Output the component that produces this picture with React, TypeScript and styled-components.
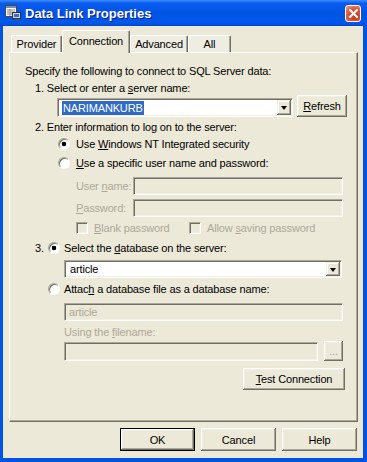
import styled, { createGlobalStyle } from "styled-components";

const GlobalStyle = createGlobalStyle`
  html, body {
    margin: 0;
    padding: 0;
  }
  body {
    font-family: "Liberation Sans", Arial, sans-serif;
    font-size: 11px;
    letter-spacing: -0.15px;
    color: #000;
    background: #ece9d8;
  }
  * {
    box-sizing: border-box;
  }
`;

const Window = styled.div`
  width: 367px;
  height: 462px;
  display: flex;
  flex-direction: column;
  background: #0054e3;
  overflow: hidden;
`;

const TitleBar = styled.div`
  height: 26px;
  flex: none;
  display: flex;
  align-items: center;
  gap: 4px;
  padding: 0 6px 0 5px;
  background: linear-gradient(
    180deg,
    #3d8dff 0%,
    #0a5cf0 12%,
    #0054e3 50%,
    #0058eb 85%,
    #0049d4 100%
  );
`;

const TitleText = styled.span`
  font-family: "Liberation Sans", Arial, sans-serif;
  font-size: 13px;
  font-weight: 700;
  letter-spacing: 0;
  color: #fff;
  text-shadow: 1px 1px 0 #0a1f8a;
  white-space: nowrap;
`;

const CloseButton = styled.div`
  width: 16px;
  height: 17px;
  margin-left: auto;
  border: 1px solid #fff;
  border-radius: 3px;
  background: radial-gradient(circle at 65% 70%, #c4371b 0%, #e2573a 55%, #f2a08a 100%);
  display: flex;
  align-items: center;
  justify-content: center;
`;

const Client = styled.div`
  flex: 1;
  margin: 0 4px 4px 3px;
  padding: 4px 5px 0 6px;
  background: #ece9d8;
  display: flex;
  flex-direction: column;
`;

const TabRow = styled.div`
  height: 22px;
  flex: none;
  display: flex;
  align-items: flex-end;
  padding-left: 2px;
`;

const Tab = styled.div<{ $active?: boolean; $w: number }>`
  width: ${(p) => p.$w}px;
  height: ${(p) => (p.$active ? 23 : 17)}px;
  margin-bottom: ${(p) => (p.$active ? -1 : 0)}px;
  padding-bottom: ${(p) => (p.$active ? 2 : 0)}px;
  position: relative;
  z-index: ${(p) => (p.$active ? 2 : 1)};
  display: flex;
  align-items: center;
  justify-content: center;
  background: ${(p) => (p.$active ? "#ece9d8" : "#efede2")};
  border-top: 1px solid #fff;
  border-left: 1px solid #fff;
  border-right: 1px solid #716f64;
  box-shadow: inset -1px 0 #aca899;
  border-radius: 2px 2px 0 0;
`;

const Panel = styled.div`
  height: 370px;
  flex: none;
  display: flex;
  flex-direction: column;
  padding-top: 9px;
  background: #ece9d8;
  border-top: 1px solid #fff;
  border-left: 1px solid #fff;
  border-right: 1px solid #716f64;
  border-bottom: 1px solid #716f64;
  box-shadow: inset -1px -1px #aca899;
`;

const Line = styled.div<{ $h: number; $indent?: number; $align?: string; $right?: number }>`
  height: ${(p) => p.$h}px;
  flex: none;
  display: flex;
  align-items: ${(p) => p.$align ?? "center"};
  justify-content: ${(p) => (p.$right !== undefined ? "flex-end" : "flex-start")};
  margin-left: ${(p) => p.$indent ?? 0}px;
  padding-right: ${(p) => p.$right ?? 0}px;
  white-space: nowrap;
`;

const Text = styled.span<{ $disabled?: boolean; $w?: number }>`
  color: ${(p) => (p.$disabled ? "#aca899" : "#000")};
  width: ${(p) => (p.$w ? `${p.$w}px` : "auto")};
  flex: none;
`;

const U = styled.span`
  text-decoration: underline;
  text-underline-offset: 1px;
`;

const Radio = styled.span<{ $checked?: boolean; $gap: number }>`
  width: 12px;
  height: 12px;
  flex: none;
  margin-right: ${(p) => p.$gap}px;
  border-radius: 50%;
  border: 1px solid;
  border-color: #aca899 #fff #fff #aca899;
  box-shadow: inset 1px 1px #716f64;
  background: ${(p) =>
    p.$checked
      ? "radial-gradient(circle at 50% 50%, #000 0 2px, #fff 2.6px)"
      : "#fff"};
`;

const Check = styled.span`
  width: 12px;
  height: 12px;
  flex: none;
  margin-right: 6px;
  border: 1px solid;
  border-color: #aca899 #fff #fff #aca899;
  box-shadow: inset 1px 1px #716f64, inset -1px -1px #f1efe2;
  background: #ece9d8;
`;

const CheckItem = styled.span<{ $w?: number }>`
  display: flex;
  align-items: center;
  width: ${(p) => (p.$w ? `${p.$w}px` : "auto")};
`;

const Field = styled.div<{ $w: number; $h: number; $disabled?: boolean }>`
  width: ${(p) => p.$w}px;
  height: ${(p) => p.$h}px;
  flex: none;
  display: flex;
  align-items: center;
  padding: 2px 2px 2px 4px;
  border: 1px solid;
  border-color: #aca899 #fff #fff #aca899;
  box-shadow: inset 1px 1px #716f64, inset -1px -1px #f1efe2;
  background: ${(p) => (p.$disabled ? "#ece9d8" : "#fff")};
  color: ${(p) => (p.$disabled ? "#aca899" : "#000")};
`;

const ComboValue = styled.span<{ $selected?: boolean }>`
  flex: 1;
  display: flex;
  & > span {
    padding: 1px 1px;
    background: ${(p) => (p.$selected ? "#316ac5" : "transparent")};
    color: ${(p) => (p.$selected ? "#fff" : "#000")};
  }
`;

const DropButton = styled.span`
  width: 14px;
  align-self: stretch;
  flex: none;
  margin: -1px -1px -1px 0;
  display: flex;
  align-items: center;
  justify-content: center;
  background: #ece9d8;
  box-shadow: inset -1px -1px #716f64, inset 1px 1px #f1efe2, inset -2px -2px #aca899,
    inset 2px 2px #fff;
  &::before {
    content: "";
    border-left: 3.5px solid transparent;
    border-right: 3.5px solid transparent;
    border-top: 4px solid #000;
    margin-top: 1px;
  }
`;

const Button = styled.button<{ $w: number; $h: number; $default?: boolean; $disabled?: boolean }>`
  width: ${(p) => p.$w}px;
  height: ${(p) => p.$h}px;
  flex: none;
  padding: 0;
  font: inherit;
  letter-spacing: inherit;
  color: ${(p) => (p.$disabled ? "#aca899" : "#000")};
  background: #ece9d8;
  border: ${(p) => (p.$default ? "1px solid #000" : "none")};
  box-shadow: inset -1px -1px #716f64, inset 1px 1px #fff, inset -2px -2px #aca899,
    inset 2px 2px #f1efe2;
  cursor: default;
`;

const ButtonRow = styled.div`
  margin-top: 6px;
  display: flex;
  justify-content: flex-end;
  gap: 6px;
  padding-right: 1px;
`;

const StepNo = styled.span`
  width: 13px;
  flex: none;
`;

function AppIcon() {
  return (
    <svg width="16" height="16" viewBox="0 0 16 16">
      <rect x="0.5" y="0.5" width="11" height="11" fill="#fff" stroke="#4a4a4a" />
      <rect x="1" y="1" width="10" height="2" fill="#7b8db5" />
      <path d="M2 5h8M2 7h8M2 9h5M5 4v7" stroke="#8a8a8a" strokeWidth="1" />
      <rect x="7.5" y="7.5" width="8" height="6" fill="#c9d7f0" stroke="#333" />
      <rect x="9" y="9" width="5" height="3" fill="#3a6fd0" />
      <path d="M10 14h4v1.5h-4z" fill="#555" />
    </svg>
  );
}

export default function App() {
  return (
    <>
      <GlobalStyle />
      <Window>
        <TitleBar>
          <AppIcon />
          <TitleText>Data Link Properties</TitleText>
          <CloseButton>
            <svg width="9" height="9" viewBox="0 0 9 9">
              <path d="M1 1l7 7M8 1l-7 7" stroke="#fff" strokeWidth="2" strokeLinecap="square" />
            </svg>
          </CloseButton>
        </TitleBar>

        <Client>
          <TabRow>
            <Tab $w={51}>Provider</Tab>
            <Tab $w={68} $active>
              Connection
            </Tab>
            <Tab $w={58}>Advanced</Tab>
            <Tab $w={43}>All</Tab>
          </TabRow>

          <Panel>
            <Line $h={18} $indent={15}>
              <Text>Specify the following to connect to SQL Server data:</Text>
            </Line>
            <Line $h={15} $indent={25}>
              <Text>
                1. Select or enter a <U>s</U>erver name:
              </Text>
            </Line>
            <Line $h={22} $indent={47} $align="flex-end">
              <Field $w={236} $h={19}>
                <ComboValue $selected>
                  <span>NARIMANKURB</span>
                </ComboValue>
                <DropButton />
              </Field>
              <Button $w={50} $h={22} style={{ marginLeft: 4 }}>
                <U>R</U>efresh
              </Button>
            </Line>
            <Line $h={20} $indent={25}>
              <Text>2. Enter information to log on to the server:</Text>
            </Line>
            <Line $h={14} $indent={48}>
              <Radio $checked $gap={6} />
              <Text>
                Use <U>W</U>indows NT Integrated security
              </Text>
            </Line>
            <Line $h={24} $indent={48}>
              <Radio $gap={6} />
              <Text>
                <U>U</U>se a specific user name and password:
              </Text>
            </Line>
            <Line $h={21} $indent={66}>
              <Text $disabled $w={57}>
                User <U>n</U>ame:
              </Text>
              <Field $w={210} $h={18} $disabled />
            </Line>
            <Line $h={24} $indent={66}>
              <Text $disabled $w={57}>
                <U>P</U>assword:
              </Text>
              <Field $w={210} $h={18} $disabled />
            </Line>
            <Line $h={16} $indent={66}>
              <CheckItem $w={113}>
                <Check />
                <Text $disabled>
                  <U>B</U>lank password
                </Text>
              </CheckItem>
              <CheckItem>
                <Check />
                <Text $disabled>
                  Allow <U>s</U>aving password
                </Text>
              </CheckItem>
            </Line>
            <Line $h={24} $indent={25}>
              <StepNo>3.</StepNo>
              <Radio $checked $gap={4} />
              <Text>
                Select the <U>d</U>atabase on the server:
              </Text>
            </Line>
            <Line $h={18} $indent={54}>
              <Field $w={278} $h={18}>
                <ComboValue>
                  <span>article</span>
                </ComboValue>
                <DropButton />
              </Field>
            </Line>
            <Line $h={22} $indent={38}>
              <Radio $gap={4} />
              <Text>
                Attac<U>h</U> a database file as a database name:
              </Text>
            </Line>
            <Line $h={24} $indent={54}>
              <Field $w={279} $h={18} $disabled>
                article
              </Field>
            </Line>
            <Line $h={16} $indent={54}>
              <Text $disabled>
                Using the <U>f</U>ilename:
              </Text>
            </Line>
            <Line $h={22} $indent={54}>
              <Field $w={254} $h={19} $disabled />
              <Button $w={19} $h={20} $disabled style={{ marginLeft: 6 }}>
                ...
              </Button>
            </Line>
            <Line $h={22} $right={12} style={{ marginTop: 6 }}>
              <Button $w={102} $h={22}>
                <U>T</U>est Connection
              </Button>
            </Line>
          </Panel>

          <ButtonRow>
            <Button $w={75} $h={23} $default>
              OK
            </Button>
            <Button $w={75} $h={23}>
              Cancel
            </Button>
            <Button $w={75} $h={23}>
              Help
            </Button>
          </ButtonRow>
        </Client>
      </Window>
    </>
  );
}
